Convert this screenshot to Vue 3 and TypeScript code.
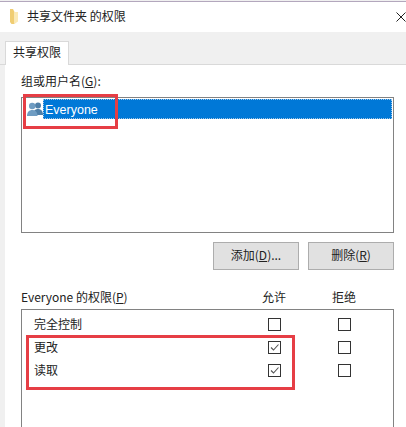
<script setup lang="ts">
interface Perm { name: string; allow: boolean; deny: boolean }
const perms: Perm[] = [
  { name: '完全控制', allow: false, deny: false },
  { name: '更改', allow: true, deny: false },
  { name: '读取', allow: true, deny: false },
]
</script>

<template>
  <div class="dialog">
    <header class="titlebar">
      <svg class="folder" width="10" height="16" viewBox="0 0 10 16">
        <path d="M1 0h3l1.500 3v12H2.500L1 13z" fill="#f0cd72" />
        <path d="M5.500 3H9v9.500L5.500 15z" fill="#fbe9b4" />
      </svg>
      <span class="title">共享文件夹 的权限</span>
      <svg class="close" width="10" height="10" viewBox="0 0 10 10">
        <path d="M.5.500l9 9M9.500.500l-9 9" stroke="#222" stroke-width="1" fill="none" />
      </svg>
    </header>
    <div class="tabstrip">
      <div class="tab">共享权限</div>
    </div>
    <main class="panel">
      <div class="label">组或用户名(<u>G</u>):</div>
      <div class="listbox">
        <div class="row">
          <svg class="users" width="16" height="14" viewBox="0 0 16 14">
            <circle cx="11" cy="3.500" r="3" fill="#4f7fa8" />
            <path d="M6 13c0-4 2-6 5-6s5 2 5 6z" fill="#4f7fa8" />
            <circle cx="5.200" cy="4" r="3.200" fill="#6f9cc2" />
            <path d="M0 14c0-4 2.200-6 5.200-6s5.300 2 5.300 6z" fill="#6f9cc2" />
          </svg>
          <span class="selected">Everyone</span>
        </div>
      </div>
      <div class="actions">
        <button class="btn">添加(<u>D</u>)...</button>
        <button class="btn">删除(<u>R</u>)</button>
      </div>
      <div class="permhead">
        <span class="permtitle">Everyone 的权限(<u>P</u>)</span>
        <span class="col coltext">允许</span>
        <span class="col coltext">拒绝</span>
      </div>
      <div class="permbox">
        <div v-for="p in perms" :key="p.name" class="permrow">
          <span class="permname">{{ p.name }}</span>
          <span class="col">
            <span class="check">
              <svg v-if="p.allow" width="11" height="11" viewBox="0 0 11 11">
                <path d="M2 5.500l2.500 2.500L9.500 2.500" stroke="#555" stroke-width="1.100" fill="none" />
              </svg>
            </span>
          </span>
          <span class="col">
            <span class="check">
              <svg v-if="p.deny" width="11" height="11" viewBox="0 0 11 11">
                <path d="M2 5.500l2.500 2.500L9.500 2.500" stroke="#555" stroke-width="1.100" fill="none" />
              </svg>
            </span>
          </span>
        </div>
      </div>
    </main>
    <div class="mark mark-user"></div>
    <div class="mark mark-perm"></div>
  </div>
</template>

<style scoped>
.dialog {
  position: relative;
  width: 406px;
  height: 427px;
  overflow: hidden;
  background: #f0f0f0;
  font-family: "Noto Sans CJK SC", "Liberation Sans", sans-serif;
  font-size: 12px;
  color: #222;
  display: flex;
  flex-direction: column;
  box-sizing: border-box;
}
.titlebar {
  margin-top: 1px;
  height: 30px;
  border-top: 1px solid #b3a7bd;
  background: #fff;
  display: flex;
  align-items: center;
  padding: 0 0 0 9px;
}
.folder { flex: none; }
.title { margin-left: 8px; font-size: 12px; flex: 1; line-height: 14px; padding-bottom: 2px; }
.close { flex: none; }
.tabstrip {
  height: 33px;
  box-sizing: border-box;
  padding: 9px 0 0 5px;
  background: #f0f0f0;
  border-bottom: 1px solid #d9d9d9;
  display: flex;
}
.tab {
  width: 64px;
  height: 24px;
  box-sizing: border-box;
  background: #fff;
  border: 1px solid #d9d9d9;
  border-bottom: none;
  text-align: center;
  line-height: 19px;
}
.panel {
  flex: 1;
  background: #fff;
  margin-left: 5px;
  padding: 0 12px 0 16px;
  box-sizing: border-box;
  display: flex;
  flex-direction: column;
}
.label { margin-top: 6px; height: 26px; line-height: 20px; }
.listbox {
  height: 136px;
  box-sizing: border-box;
  border: 1px solid #828282;
  padding: 1px;
}
.row { display: flex; align-items: center; height: 20px; }
.users { margin-left: 4px; flex: none; }
.selected {
  flex: 1;
  height: 20px;
  line-height: 22px;
  padding-left: 2px;
  box-sizing: border-box;
  background: #0078d7;
  color: #fff;
  outline: 1px dotted #9cc4e6;
  outline-offset: -1px;
  font-family: "Liberation Sans", sans-serif;
  font-size: 12.500px;
}
.actions {
  display: flex;
  justify-content: flex-end;
  gap: 9px;
  margin-top: 9px;
}
.btn {
  width: 86px;
  height: 28px;
  padding: 0 0 3px;
  box-sizing: border-box;
  background: #e1e1e1;
  border: 1px solid #adadad;
  font: inherit;
  color: #222;
}
.permhead {
  display: flex;
  align-items: center;
  margin-top: 16px;
  height: 23px;
  padding: 0 15px 2px 0;
  box-sizing: border-box;
  line-height: 20px;
}
.permtitle { flex: 1; }
.permbox {
  flex: 1;
  box-sizing: border-box;
  border: 1px solid #828282;
  padding: 3px 14px 0 0;
  margin-bottom: -2px;
}
.permrow { display: flex; align-items: center; height: 23px; }
.permname { flex: 1; padding: 0 0 2px 12px; }
.col {
  width: 70px;
  flex: none;
  display: flex;
  padding-left: 29px;
  box-sizing: border-box;
}
.coltext { padding-left: 0; justify-content: center; }
.check {
  width: 13px;
  height: 13px;
  box-sizing: border-box;
  border: 1px solid #333;
  display: flex;
  align-items: center;
  justify-content: center;
  background: #fff;
}
.mark {
  position: absolute;
  border: 3px solid #e63e45;
  box-sizing: border-box;
}
.mark-user { left: 23px; top: 94px; width: 95px; height: 35px; }
.mark-perm { left: 26px; top: 335px; width: 269px; height: 55px; }
</style>
